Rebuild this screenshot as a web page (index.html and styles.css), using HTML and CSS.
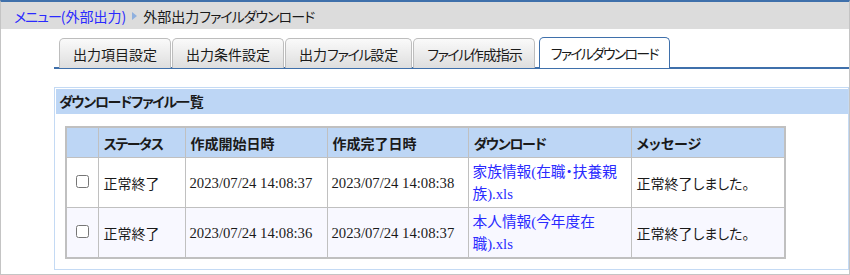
FILE: index.html
```html
<!DOCTYPE html>
<html lang="ja">
<head>
    <meta charset="UTF-8">
    <title>外部出力ファイルダウンロード</title>
    <link rel="stylesheet" href="styles.css">
</head>
<body>
    <div class="frame">
        <!-- Breadcrumb -->
        <div class="crumbs">
            <a href="#"><span class="kana">メニュー</span>(外部出力)</a>
            <span class="sep"></span>
            <span>外部出力<span class="kana">ファイルダウンロード</span></span>
        </div>

        <!-- Tabs -->
        <nav class="tabs">
            <a href="#" class="tab">出力項目設定</a>
            <a href="#" class="tab">出力条件設定</a>
            <a href="#" class="tab">出力<span class="kana">ファイル</span>設定</a>
            <a href="#" class="tab tight"><span class="kana">ファイル</span>作成指示</a>
            <a href="#" class="tab active"><span class="kana">ファイルダウンロード</span></a>
        </nav>

        <!-- Download list -->
        <section class="panel">
            <h2><span class="kana">ダウンロードファイル</span>一覧</h2>
            <table class="files">
                <colgroup>
                    <col style="width: 32px">
                    <col style="width: 87px">
                    <col style="width: 142px">
                    <col style="width: 141px">
                    <col style="width: 163px">
                    <col style="width: 154px">
                </colgroup>
                <thead>
                    <tr>
                        <th></th>
                        <th><span class="kana">ステータス</span></th>
                        <th>作成開始日時</th>
                        <th>作成完了日時</th>
                        <th><span class="kana">ダウンロード</span></th>
                        <th>メッセージ</th>
                    </tr>
                </thead>
                <tbody>
                    <tr>
                        <td class="check"><input type="checkbox"></td>
                        <td class="jp">正常終了</td>
                        <td>2023/07/24 14:08:37</td>
                        <td>2023/07/24 14:08:38</td>
                        <td><a href="#">家族情報(在職・扶養親族).xls</a></td>
                        <td class="jp">正常終了しました。</td>
                    </tr>
                    <tr class="alt">
                        <td class="check"><input type="checkbox"></td>
                        <td class="jp">正常終了</td>
                        <td>2023/07/24 14:08:36</td>
                        <td>2023/07/24 14:08:37</td>
                        <td><a href="#">本人情報(今年度在職).xls</a></td>
                        <td class="jp">正常終了しました。</td>
                    </tr>
                </tbody>
            </table>
        </section>
    </div>
</body>
</html>
```

FILE: styles.css
```css
body {
    margin: 0;
    font-family: "Noto Sans CJK JP", sans-serif;
    font-size: 14px;
    font-feature-settings: "palt";
    color: #1a1a1a;
}

/* katakana runs are set tighter, like the narrow UI font of the original */
.kana {
    letter-spacing: -1.3px;
}

.frame {
    box-sizing: border-box;
    width: 850px;
    height: 275px;
    border: 1px solid #c4c4c4;
    border-top: 2px solid #3f70ab;
}

/* Breadcrumb */
.crumbs {
    height: 27px;
    background-color: #dcdcdc;
    padding-left: 13px;
    display: flex;
    align-items: center;
    gap: 4px;
    line-height: 1;
}
.crumbs .kana {
    letter-spacing: -1px;
}
.crumbs a {
    color: #2a2aff;
    text-decoration: none;
}
.sep {
    width: 0;
    height: 0;
    border-left: 5px solid #8fb0de;
    border-top: 4px solid transparent;
    border-bottom: 4px solid transparent;
    margin: 0 2px;
}

/* Tabs */
.tabs {
    display: flex;
    gap: 1px;
    margin: 9px 0 0 53px;
    padding-left: 5px;
    border-bottom: 2px solid #3f70ab;
    height: 29px;
    align-items: flex-end;
}
.tab {
    box-sizing: border-box;
    height: 30px;
    margin-bottom: -1px;
    padding: 0 13px;
    display: flex;
    align-items: center;
    color: #1a1a1a;
    text-decoration: none;
    background: linear-gradient(#fafafa, #dedede);
    border: 1px solid #bdbdbd;
    border-bottom: none;
    border-radius: 5px 5px 0 0;
}
.tab.tight {
    letter-spacing: -1px;
    padding: 0 12px 0 13px;
}
.tab.tight .kana {
    letter-spacing: -1.5px;
}
.tab.active {
    background: #ffffff;
    border: 1px solid #3f70ab;
    border-bottom: none;
    margin-left: 3px;
    padding: 0 11px;
    height: 31px;
}
.tab.active .kana {
    letter-spacing: -1.8px;
}

/* Panel */
.panel {
    margin: 18px 0 0 53px;
    border: 1px solid #c4daf4;
    padding: 1px 0 10px 1px;
}
.panel h2 {
    margin: 0;
    height: 25px;
    line-height: 25px;
    padding-left: 3px;
    font-size: 14px;
    font-weight: bold;
    background-color: #bdd6f5;
}

/* File table */
.files {
    margin: 12px 0 0 9px;
    border-collapse: collapse;
    border: 2px solid #c0c0c0;
    table-layout: fixed;
}
.files th,
.files td {
    border: 1px solid #c0c0c0;
    padding: 0 5px;
    text-align: left;
}
.files th {
    height: 29px;
    background-color: #bdd6f5;
    font-weight: bold;
}
.files td {
    height: 49px;
    font-family: "Liberation Serif", "Noto Sans CJK JP", serif;
    font-size: 14.7px;
    line-height: 22px;
    padding-left: 4px;
}
.files td.jp {
    font-family: "Noto Sans CJK JP", sans-serif;
    font-size: 14px;
    padding-left: 5px;
}
.files td.check {
    text-align: center;
    padding: 0;
}
.files td.check input {
    margin: 0;
    width: 13px;
    height: 13px;
}
.files tr.alt td {
    background-color: #f8f8ff;
}
.files td a {
    color: #2a2aff;
    text-decoration: none;
}
```
